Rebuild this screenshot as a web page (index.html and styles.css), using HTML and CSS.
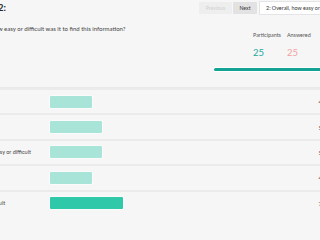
FILE: index.html
```html
<!DOCTYPE html>
<html>
<head>
<meta charset="utf-8">
<link rel="stylesheet" href="styles.css">
</head>
<body>
<div class="page">
  <header class="topbar">
    <div class="title-box"><h1 class="qtitle">Question 2:</h1></div>
    <nav class="pager">
      <button class="btn btn-prev">Previous</button>
      <button class="btn btn-next">Next</button>
      <div class="select">2: Overall, how easy or difficult was it to find this information?</div>
    </nav>
  </header>
  <section class="summary">
    <div class="qtext-box"><p class="qtext">Overall, how easy or difficult was it to find this information?</p></div>
    <div class="side">
      <div class="stats">
        <div class="stat"><span class="stat-label">Participants</span><span class="stat-num teal">25</span></div>
        <div class="stat"><span class="stat-label">Answered</span><span class="stat-num pink">25</span></div>
      </div>
      <div class="progress"></div>
    </div>
  </section>
  <ul class="rows">
    <li class="row"><span class="label">Very easy</span><div class="track"><div class="bar" style="width:16%"></div></div><span class="count">4</span></li>
    <li class="row"><span class="label">Easy</span><div class="track"><div class="bar" style="width:20%"></div></div><span class="count">5</span></li>
    <li class="row"><span class="label">Neither easy or difficult</span><div class="track"><div class="bar" style="width:20%"></div></div><span class="count">5</span></li>
    <li class="row"><span class="label">Difficult</span><div class="track"><div class="bar" style="width:16%"></div></div><span class="count">4</span></li>
    <li class="row"><span class="label">Very difficult</span><div class="track"><div class="bar bar-top" style="width:28%"></div></div><span class="count">7</span></li>
  </ul>
</div>
</body>
</html>
```
FILE: styles.css
```css
* { box-sizing: border-box; }
html, body { margin: 0; padding: 0; }
body {
  width: 320px;
  height: 214px;
  overflow: hidden;
  background: #f6f6f6;
  font-family: Lato, "Liberation Sans", sans-serif;
  color: #444;
}
.page { width: 400px; margin-left: -40px; }

.topbar { display: flex; align-items: center; height: 16px; }
.title-box { width: 46px; display: flex; justify-content: flex-end; }
.qtitle {
  margin: 0;
  font-size: 9.5px;
  font-weight: 700;
  color: #2a2a2a;
  white-space: nowrap;
  line-height: 12px;
}
.pager { display: flex; align-items: center; margin-left: auto; }
.btn {
  height: 12px;
  padding: 0;
  border: none;
  border-radius: 1px;
  font-family: inherit;
  font-size: 5.2px;
  line-height: 12px;
}
.btn-prev { width: 33px; background: #eeeeee; color: #d0d0d0; }
.btn-next { width: 24px; margin-left: 1px; background: #e2e2e2; color: #333; }
.select {
  width: 101px;
  height: 14px;
  margin-left: 2px;
  padding-left: 6px;
  background: #fff;
  border: 1px solid #e4e4e4;
  font-size: 5.4px;
  line-height: 12px;
  color: #333;
  white-space: nowrap;
  overflow: hidden;
}

.summary {
  display: grid;
  grid-template-columns: 1fr 146px;
  height: 72px;
  border-bottom: 1px solid #e9e9e9;
}
.qtext-box { width: 165.5px; display: flex; justify-content: flex-end; padding-top: 9px; }
.qtext {
  margin: 0;
  font-size: 6px;
  line-height: 8px;
  color: #444;
  white-space: nowrap;
}
.side { padding-top: 15px; }
.stats { display: flex; gap: 6px; padding-left: 39px; }
.stat { display: flex; flex-direction: column; }
.stat-label { font-size: 5.4px; line-height: 8px; color: #555; }
.stat-num { margin-top: 7.5px; font-size: 9.5px; line-height: 12px; font-weight: 400; }
.teal { color: #23a99d; }
.pink { color: #f4a1a1; }
.progress {
  margin-top: 9px;
  height: 3.5px;
  border-radius: 2px;
  background: #12a394;
  box-shadow: 0 0 0 1px #fff;
}

.rows { list-style: none; margin: 0; padding: 0; }
.row {
  display: flex;
  align-items: center;
  height: 25.4px;
  border-top: 2px solid #ebebeb;
}
.label {
  width: 90px;
  padding-left: 14.6px;
  font-size: 5.5px;
  color: #444;
  white-space: nowrap;
}
.track { width: 260px; height: 12px; }
.bar {
  height: 12px;
  border-radius: 1px;
  background: #a8e5d8;
  box-shadow: 0 0 0 0.5px #fff;
}
.bar-top { background: #2fc8a8; }
.count { margin-left: 8.5px; font-size: 6px; color: #555; }
```
